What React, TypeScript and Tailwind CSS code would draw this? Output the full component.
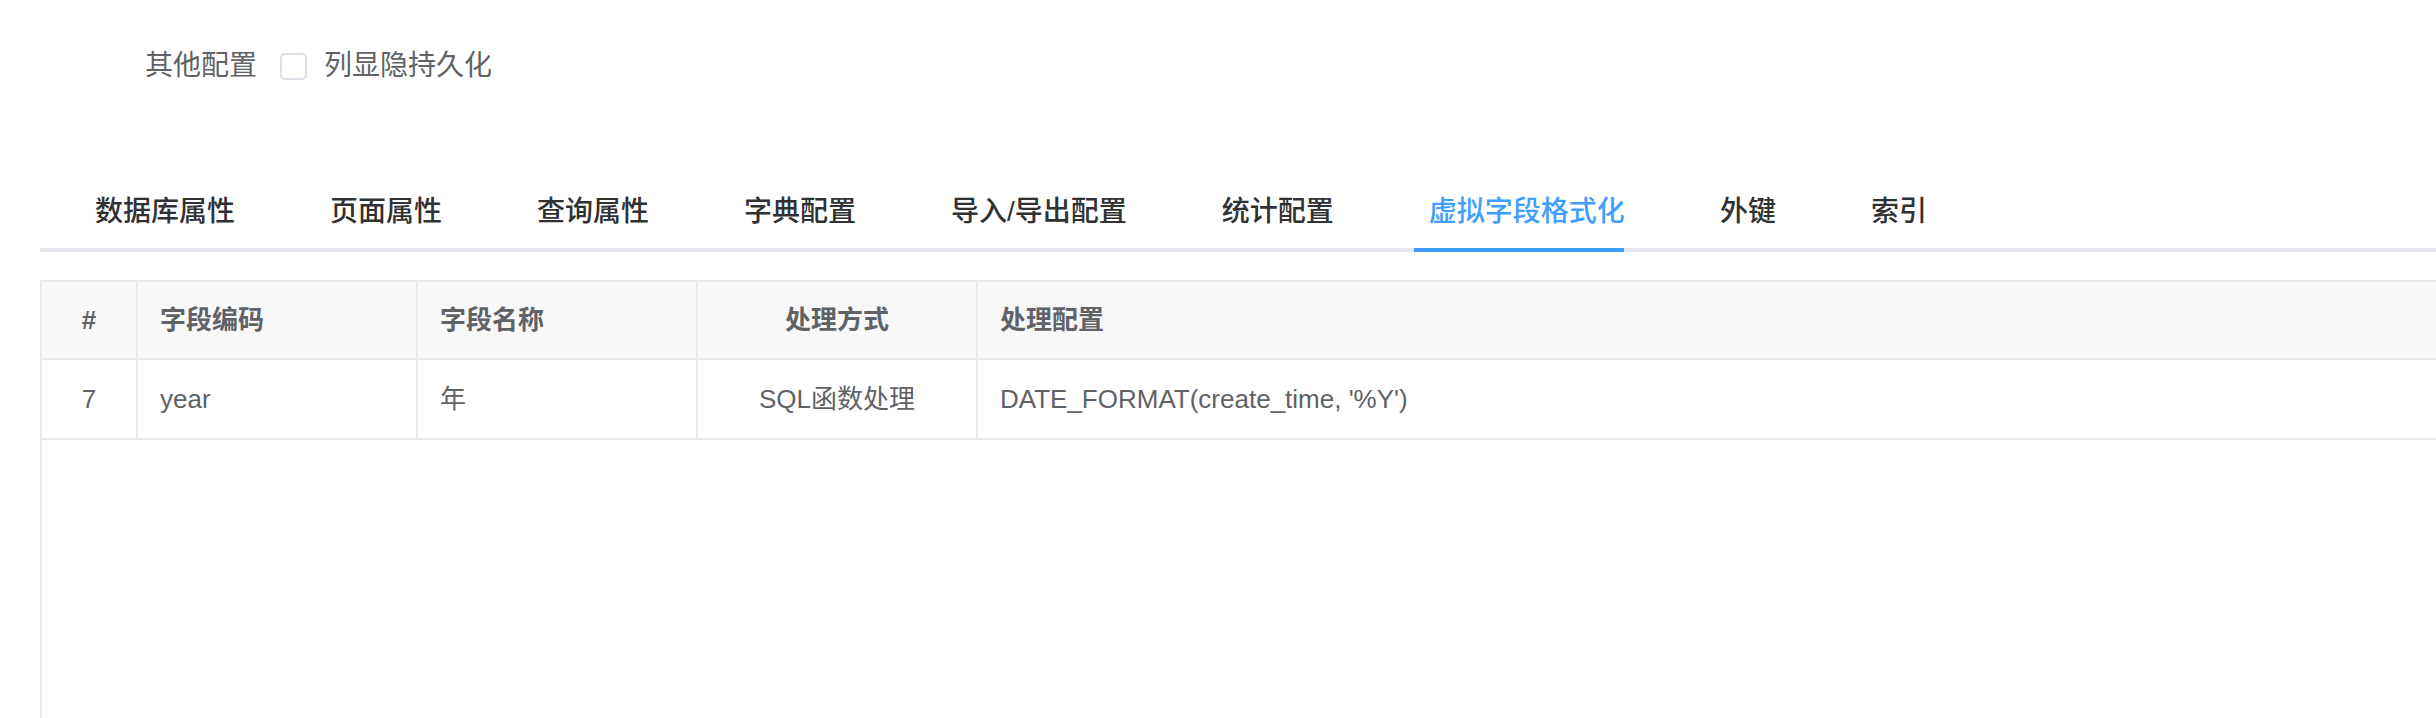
const tabs = [
  '数据库属性',
  '页面属性',
  '查询属性',
  '字典配置',
  '导入/导出配置',
  '统计配置',
  '虚拟字段格式化',
  '外键',
  '索引',
];

const activeTab = '虚拟字段格式化';

const rows = [
  { no: 7, code: 'year', name: '年', mode: 'SQL函数处理', config: "DATE_FORMAT(create_time, '%Y')" },
];

function Checkbox({ label }: { label: string }) {
  return (
    <label className="flex items-center cursor-pointer">
      <span className="w-[27px] h-[27px] border-2 border-[#dcdfe6] rounded-[5px] bg-white" />
      <span className="ml-[17px] text-[28px] leading-none text-[#606266]">{label}</span>
    </label>
  );
}

export default function App() {
  return (
    <div
      className="min-h-screen bg-white pl-[40px] overflow-hidden"
      style={{ fontFamily: '"Liberation Sans", "Noto Sans CJK SC", sans-serif' }}
    >
      {/* 其他配置 */}
      <div className="flex items-center h-[80px] mt-[26px] pl-[105px]">
        <span className="text-[28px] leading-none text-[#606266]">其他配置</span>
        <div className="ml-[23px]">
          <Checkbox label="列显隐持久化" />
        </div>
      </div>

      {/* Tabs */}
      <div className="relative mt-[66px] h-[80px]">
        <div className="absolute bottom-0 left-0 right-0 h-[4px] bg-[#e4e7ed]" />
        <div className="relative flex h-full pl-[7.5px]">
          {tabs.map((t) => {
            const active = t === activeTab;
            return (
              <div
                key={t}
                className={
                  'relative px-[47.5px] h-full leading-[80px] text-[28px] font-medium whitespace-nowrap ' +
                  (active ? 'text-[#409eff]' : 'text-[#303133]')
                }
              >
                {t}
                {active && <div className="absolute bottom-0 left-[32.5px] w-[210px] h-[4px] bg-[#409eff]" />}
              </div>
            );
          })}
        </div>
      </div>

      {/* Table */}
      <div className="mt-[28px] h-[438px] border-l-2 border-t-2 border-[#e8eaec] text-[26px] text-[#606266]">
        <div className="grid grid-cols-[96px_280px_280px_280px_1fr] h-[78px] bg-[#f8f8f9] border-b-2 border-[#e8eaec] font-semibold">
          <div className="flex items-center justify-center border-r-2 border-[#e8eaec]">#</div>
          <div className="flex items-center px-[22px] border-r-2 border-[#e8eaec]">字段编码</div>
          <div className="flex items-center px-[22px] border-r-2 border-[#e8eaec]">字段名称</div>
          <div className="flex items-center justify-center border-r-2 border-[#e8eaec]">处理方式</div>
          <div className="flex items-center px-[22px]">处理配置</div>
        </div>
        {rows.map((r) => (
          <div
            key={r.no}
            className="grid grid-cols-[96px_280px_280px_280px_1fr] h-[80px] border-b-2 border-[#e8eaec]"
          >
            <div className="flex items-center justify-center border-r-2 border-[#e8eaec]">{r.no}</div>
            <div className="flex items-center px-[22px] border-r-2 border-[#e8eaec]">{r.code}</div>
            <div className="flex items-center px-[22px] border-r-2 border-[#e8eaec]">{r.name}</div>
            <div className="flex items-center justify-center border-r-2 border-[#e8eaec]">{r.mode}</div>
            <div className="flex items-center px-[22px] whitespace-nowrap">{r.config}</div>
          </div>
        ))}
      </div>
    </div>
  );
}
